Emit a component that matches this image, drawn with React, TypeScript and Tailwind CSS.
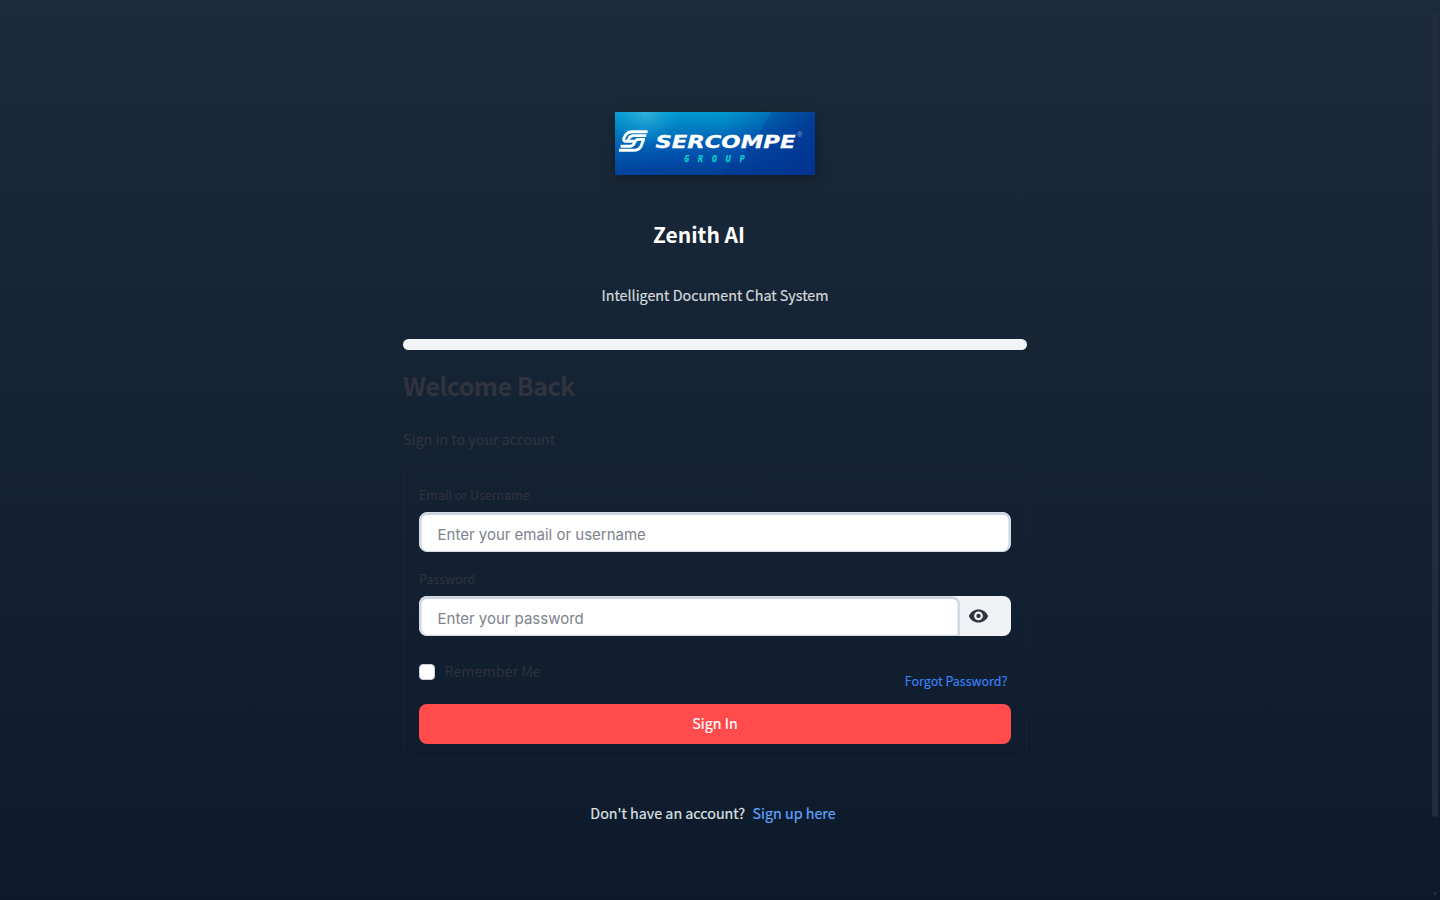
import React from "react";

function BrandLogo() {
  return (
    <svg
      width="200"
      height="63"
      viewBox="0 0 200 63"
      className="block shadow-[0_4px_12px_rgba(0,0,0,0.3)]"
      role="img"
      aria-label="Sercompe Group"
    >
      <defs>
        <linearGradient id="base" x1="0" y1="0" x2="0.55" y2="1.2" gradientUnits="objectBoundingBox">
          <stop offset="0" stopColor="#04a0d0" />
          <stop offset="0.35" stopColor="#0292cd" />
          <stop offset="0.65" stopColor="#0462ba" />
          <stop offset="1" stopColor="#023c95" />
        </linearGradient>
        <linearGradient id="depth" x1="0" y1="0" x2="0" y2="1">
          <stop offset="0" stopColor="#003c9c" stopOpacity="0" />
          <stop offset="0.55" stopColor="#0046a8" stopOpacity="0.6" />
          <stop offset="1" stopColor="#003a92" stopOpacity="0.8" />
        </linearGradient>
        <linearGradient id="side" x1="0" y1="0" x2="1" y2="0">
          <stop offset="0.55" stopColor="#0040a0" stopOpacity="0" />
          <stop offset="1" stopColor="#003490" stopOpacity="0.75" />
        </linearGradient>
        <linearGradient id="beam" x1="140" y1="20" x2="175" y2="45" gradientUnits="userSpaceOnUse">
          <stop offset="0" stopColor="#02338e" stopOpacity="0.3" />
          <stop offset="1" stopColor="#02338e" stopOpacity="0.45" />
        </linearGradient>
        <radialGradient id="glow" cx="30" cy="0" r="34" gradientUnits="userSpaceOnUse">
          <stop offset="0" stopColor="#40b8dc" stopOpacity="0.75" />
          <stop offset="1" stopColor="#12a4da" stopOpacity="0" />
        </radialGradient>
      </defs>
      <rect width="200" height="63" fill="url(#base)" />
      <rect width="200" height="63" fill="url(#depth)" />
      <rect width="200" height="63" fill="url(#side)" />
      <path d="M156 0H200V63H104C127 45 144 25 156 0Z" fill="url(#beam)" />
      <rect width="200" height="63" fill="url(#glow)" />
      <g fill="none" stroke="#fff" strokeWidth="2.9" strokeLinejoin="round">
        <path d="M32.6 19.7H17.5Q12 19.7 10 24L8.9 26.4Q7.9 29.3 11 29.3H19" />
        <path d="M31.3 23.6H18.5Q15.6 23.6 14.2 26L13 28.6" />
        <path d="M30 27.4H23.5Q20.8 27.4 19.8 30L19.5 30.8Q18.2 34.3 14.6 34.3H5.6" />
        <path d="M4 38.3H18.2Q24.2 38.3 26.2 33.8L28.4 28" />
      </g>
      <text
        x="40.4"
        y="35.6"
        fill="#fff"
        stroke="#fff"
        strokeWidth="0.3"
        textLength="140"
        lengthAdjust="spacingAndGlyphs"
        className="font-['DejaVu_Sans',sans-serif] text-[17.6px] font-bold italic"
      >
        SERCOMPE
      </text>
      <text x="182" y="24.5" fill="#8fa8d8" className="font-['Liberation_Sans',sans-serif] text-[7px]">
        ®
      </text>
      <text
        x="69.2"
        y="50"
        fill="#08d2c8"
        stroke="#08d2c8"
        strokeWidth="0.25"
        textLength="60.5"
        className="font-['DejaVu_Sans_Mono',monospace] text-[8.2px] font-bold italic"
      >
        GROUP
      </text>
    </svg>
  );
}

function EyeIcon() {
  return (
    <svg width="21" height="21" viewBox="0 0 24 24" fill="#31333f" aria-hidden="true">
      <path d="M12 5C7 5 2.73 8.11 1 12.5c1.73 4.39 6 7.5 11 7.5s9.27-3.11 11-7.5c-1.73-4.39-6-7.5-11-7.5zM12 17.5c-2.76 0-5-2.24-5-5s2.24-5 5-5 5 2.24 5 5-2.24 5-5 5zm0-7.4c-1.33 0-2.4 1.07-2.4 2.4s1.07 2.4 2.4 2.4 2.4-1.07 2.4-2.4-1.07-2.4-2.4-2.4z" />
    </svg>
  );
}

const inputClass =
  "h-10 min-w-0 flex-1 rounded-lg border border-[#d3dae4] bg-white pl-[17.5px] pt-[5px] font-['Inter',sans-serif] text-[15px] text-gray-800 shadow-[inset_0_2px_0_0_#cbd5e1,inset_2px_0_1px_-0.5px_#cbd5e1,inset_-2px_0_1px_-0.5px_#cbd5e1] outline-none placeholder:text-[#7d828c]";

export default function App() {
  return (
    <div className="flex h-[900px] w-full overflow-hidden bg-linear-to-b from-[#1b2b3b] to-[#0d1a2b] font-['Noto_Sans_CJK_SC',sans-serif] text-[#31333f]">
      <main className="ml-[403px] flex w-[624px] flex-col">
        <div className="mt-28 flex justify-center">
          <BrandLogo />
        </div>
        <h1 className="mt-[39px] h-10 pr-8 text-center text-[21px] leading-10 font-bold text-white">Zenith AI</h1>
        <p className="mt-[29px] h-6 text-center text-[14.3px] leading-6 text-[#d5d9de] [-webkit-text-stroke:0.2px]">
          Intelligent Document Chat System
        </p>
        <div className="mt-[32px] h-[11px] rounded-md bg-[#f3f4f6]" />
        <h2 className="mt-[15px] h-10 text-[25px] leading-10 font-bold tracking-[-0.5px]">Welcome Back</h2>
        <p className="mt-[22px] h-6 text-[14.3px] leading-6 text-[#31333f]">Sign in to your account</p>
        <form
          className="mt-[17px] h-[291px] rounded-lg border border-[#31333f]/20 px-[15px] pt-[14px]"
          onSubmit={(e) => e.preventDefault()}
        >
          <label className="block h-[29px] text-[12.5px] leading-6 text-[#31333f]" htmlFor="user">
            Email or Username
          </label>
          <div className="flex h-10">
            <input id="user" className={inputClass} placeholder="Enter your email or username" />
          </div>
          <label className="mt-[15px] block h-[29px] text-[12.5px] leading-6 text-[#31333f]" htmlFor="pass">
            Password
          </label>
          <div className="flex h-10 overflow-hidden rounded-lg bg-[#f0f2f6]">
            <input
              id="pass"
              type="password"
              className={inputClass + " rounded-b-none rounded-bl-lg"}
              placeholder="Enter your password"
            />
            <button type="button" className="flex w-[51px] justify-start pt-[9px] pl-2" aria-label="Show password">
              <EyeIcon />
            </button>
          </div>
          <div className="flex h-[68px] justify-between">
            <label className="mt-6 flex h-6 items-center gap-[9.5px] text-[14.3px] text-[#2f313d]">
              <span className="size-4 rounded-[4px] border border-[#c9ced8] bg-white" />
              <span className="-mt-0.5">Remember Me</span>
            </label>
            <a className="mt-[33px] mr-[3.5px] text-[12.5px] leading-6 text-[#3b82f6] [-webkit-text-stroke:0.15px]">
              Forgot Password?
            </a>
          </div>
          <button className="block h-10 w-full rounded-lg bg-[#ff4b4b] pb-0.5 text-[14.3px] leading-[38px] text-white [-webkit-text-stroke:0.2px]">
            Sign In
          </button>
        </form>
        <p className="mt-[42px] flex h-6 justify-center gap-[7.5px] pr-1 text-[14.3px] leading-6 text-[#dee1e5] [-webkit-text-stroke:0.2px]">
          <span>Don't have an account?</span>
          <a className="text-[#60a5fa]">Sign up here</a>
        </p>
      </main>
      <div className="ml-auto flex w-2 flex-col items-start justify-between py-1">
        <svg width="6" height="4" viewBox="0 0 6 4" fill="#1f2b3b">
          <path d="M0 4L3 0L6 4Z" />
        </svg>
        <div className="mt-[4px] mb-auto h-[805px] w-[6px] rounded-full bg-[#222c3c]" />
        <svg width="6" height="4" viewBox="0 0 6 4" fill="#1f2b3b">
          <path d="M0 0L3 4L6 0Z" />
        </svg>
      </div>
    </div>
  );
}
